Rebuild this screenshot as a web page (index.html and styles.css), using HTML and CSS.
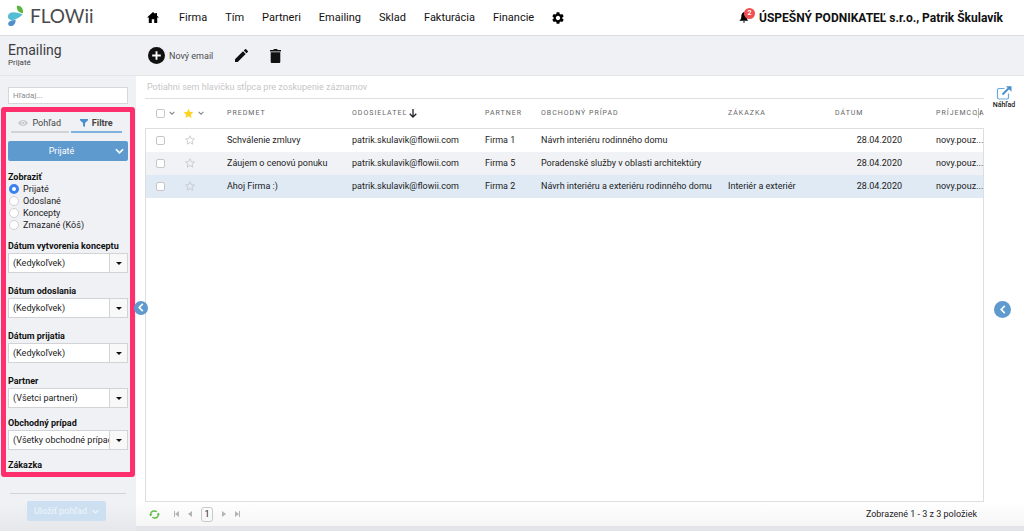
FILE: index.html
```
<!DOCTYPE html>
<html lang="sk">
<head>
<meta charset="utf-8">
<title>FLOWii – Emailing</title>
<link rel="stylesheet" href="styles.css">
</head>
<body>
<svg class="sprite" aria-hidden="true">
  <symbol id="chev-down" viewBox="0 0 10 6"><path d="M1 1l4 4 4-4" fill="none" stroke="currentColor" stroke-width="1.8"/></symbol>
  <symbol id="chev-left" viewBox="0 0 6 10"><path d="M5 1L1 5l4 4" fill="none" stroke="currentColor" stroke-width="1.8"/></symbol>
  <symbol id="star" viewBox="0 0 24 24"><path d="M12 1.8l3.1 7 7.6.7-5.8 5 1.8 7.5L12 18l-6.7 4 1.8-7.500-5.800-5 7.600-.7z"/></symbol>
</svg>

<header class="topbar">
  <a class="logo" href="#">
    <svg class="logo-mark" viewBox="0 0 18 22"><path d="M9.500.2c3.500-.6 7 2 6.300 8C12 8 8.500 4.500 9.500.2z" fill="#5cb53c"/><path d="M0 11c.5-4.800 7-5 15.500-1.800C11.500 13.800 4 17.500.8 14 0 13.200-.1 12 0 11z" fill="#55bdd3"/><path d="M8 15c.3 4-2 6.700-5 6.700-2.500 0-3.500-2.500-2.300-4.200C2 15.700 5 15.800 8 15z" fill="#4f8fcb"/></svg>
    <span>FLOWii</span>
  </a>
  <nav class="nav">
    <a class="home" href="#" aria-label="Domov"><svg width="12" height="11" viewBox="0 0 12 11"><path d="M6 0L0 5.600h1.800V11h3V7.200h2.400V11h3V5.600H12L10 3.700V1H8.300v1.100z"/></svg></a>
    <a href="#">Firma</a><a href="#">Tím</a><a href="#">Partneri</a><a href="#">Emailing</a><a href="#">Sklad</a><a href="#">Fakturácia</a><a href="#">Financie</a>
    <a href="#" aria-label="Nastavenia"><svg width="12" height="12" viewBox="2 2 20 20"><path d="M19.140 12.940c.04-.3.060-.610.060-.940 0-.320-.020-.640-.070-.940l2.030-1.580c.18-.140.230-.410.120-.610l-1.920-3.320c-.120-.220-.370-.290-.590-.220l-2.390.96c-.5-.380-1.030-.7-1.620-.940l-.36-2.540c-.040-.240-.240-.410-.480-.410h-3.840c-.240 0-.430.170-.470.410l-.36 2.540c-.590.240-1.130.570-1.620.940l-2.390-.96c-.220-.080-.470 0-.590.220L2.740 8.870c-.120.210-.080.470.120.610l2.030 1.580c-.050.300-.090.630-.090.940s.020.640.070.940l-2.030 1.580c-.180.140-.230.410-.120.610l1.920 3.320c.120.220.370.290.590.220l2.390-.96c.5.380 1.030.7 1.620.940l.36 2.540c.050.240.240.410.480.410h3.840c.240 0 .440-.170.470-.410l.36-2.540c.590-.240 1.130-.560 1.620-.940l2.390.96c.220.080.470 0 .590-.220l1.920-3.320c.120-.220.070-.470-.120-.610l-2.010-1.580zM12 15.600c-1.980 0-3.600-1.620-3.600-3.600s1.620-3.600 3.600-3.600 3.600 1.620 3.600 3.600-1.620 3.600-3.600 3.600z"/></svg></a>
  </nav>
  <div class="account">
    <button class="bell" aria-label="Upozornenia"><svg width="11" height="11" viewBox="0 0 11 11"><path d="M5 0C3 1 2.300 2.500 2.300 5c0 1.700-.8 2.700-2 3.700h9C8.200 7.700 7.700 6.500 7.700 5 7.700 2.500 7 1 5 0zM3.700 9.500h2.600L5 11z"/></svg><span class="badge">2</span></button>
    <a href="#">ÚSPEŠNÝ PODNIKATEĽ s.r.o., Patrik Škulavík</a>
  </div>
</header>

<div class="toolbar">
  <div class="heading"><h1>Emailing</h1><p>Prijaté</p></div>
  <div class="actions">
    <button><svg width="17" height="17" viewBox="0 0 17 17"><circle cx="8.500" cy="8.500" r="8.500"/><path d="M8.500 4.200v8.600M4.200 8.500h8.600" stroke="#fff" stroke-width="1.900"/></svg><span>Nový email</span></button>
    <button aria-label="Upraviť"><svg width="13" height="13" viewBox="3 3 18 18"><path d="M3 17.250V21h3.750L17.810 9.940l-3.750-3.750L3 17.250zM20.710 7.040a1 1 0 0 0 0-1.410l-2.340-2.340a1 1 0 0 0-1.410 0l-1.830 1.830 3.750 3.750 1.830-1.830z"/></svg></button>
    <button aria-label="Vymazať"><svg width="11" height="14" viewBox="0 0 11 14"><path d="M0 1h3.200l.8-1h3l.8 1H11v1.400H0zM.7 3.300h9.600v9.400c0 .8-.5 1.300-1.300 1.300H2c-.8 0-1.300-.5-1.300-1.300z"/></svg></button>
  </div>
</div>

<div class="workspace">
  <aside class="sidebar">
    <input class="search" type="text" placeholder="Hľadaj..." aria-label="Hľadaj">
    <section class="filters">
      <div class="tabs">
        <button class="tab"><svg width="10" height="6" viewBox="0 0 10 6"><path d="M0 3c2.500-4 7.500-4 10 0-2.500 4-7.500 4-10 0z" fill="#c9cacd"/><circle cx="5" cy="3" r="1.700" fill="#c9cacd" stroke="#f0f1f5" stroke-width=".8"/></svg>Pohľad</button>
        <button class="tab active"><svg width="8" height="8" viewBox="0 0 8 8"><path d="M0 0h8v1.200L5 4v4L3 7V4L0 1.200z" fill="#4a90cc"/></svg>Filtre</button>
      </div>
      <button class="view"><span>Prijaté</span><svg width="9" height="6"><use href="#chev-down"/></svg></button>
      <fieldset class="radios">
        <legend>Zobraziť</legend>
        <label><input type="radio" name="show" checked>Prijaté</label>
        <label><input type="radio" name="show">Odoslané</label>
        <label><input type="radio" name="show">Koncepty</label>
        <label><input type="radio" name="show">Zmazané (Kôš)</label>
      </fieldset>
      <div class="field date"><label for="f1">Dátum vytvorenia konceptu</label><div class="combo"><select id="f1"><option>(Kedykoľvek)</option></select></div></div>
      <div class="field date"><label for="f2">Dátum odoslania</label><div class="combo"><select id="f2"><option>(Kedykoľvek)</option></select></div></div>
      <div class="field date"><label for="f3">Dátum prijatia</label><div class="combo"><select id="f3"><option>(Kedykoľvek)</option></select></div></div>
      <div class="field"><label for="f4">Partner</label><div class="combo"><select id="f4"><option>(Všetci partneri)</option></select></div></div>
      <div class="field"><label for="f5">Obchodný prípad</label><div class="combo"><select id="f5"><option>(Všetky obchodné prípady)</option></select></div></div>
      <div class="field"><label for="f6">Zákazka</label><div class="combo"><select id="f6"><option>(Všetky zákazky)</option></select></div></div>
    </section>
    <div class="save"><button disabled><span>Uložiť pohľad</span><svg width="7" height="5"><use href="#chev-down"/></svg></button></div>
    <button class="toggle edge" aria-label="Skryť panel"><svg width="6" height="9"><use href="#chev-left"/></svg></button>
  </aside>

  <main class="content">
    <div class="columns">
      <div class="list">
        <p class="group">Potiahni sem hlavičku stĺpca pre zoskupenie záznamov</p>
        <table>
          <colgroup><col class="c-check"><col class="c-star"><col class="c-subject"><col class="c-sender"><col class="c-partner"><col><col class="c-order"><col class="c-date"><col class="c-to"></colgroup>
          <thead><tr>
            <th><div class="pick"><input type="checkbox" aria-label="Označiť všetko"><svg width="6" height="4"><use href="#chev-down"/></svg></div></th>
            <th><div class="pick"><svg class="gold" width="11" height="11"><use href="#star"/></svg><svg width="6" height="4"><use href="#chev-down"/></svg></div></th>
            <th>PREDMET</th>
            <th><div class="sorted">ODOSIELATEĽ<svg width="8" height="9" viewBox="0 0 8 9"><path d="M4 0v8M.7 4.700L4 8l3.300-3.300" fill="none" stroke="#222" stroke-width="1.300"/></svg></div></th>
            <th>PARTNER</th><th>OBCHODNÝ PRÍPAD</th><th>ZÁKAZKA</th><th>DÁTUM</th>
            <th><div class="last">PRÍJEMCO<svg width="5" height="10" viewBox="0 0 5 10"><path d="M.5 2.500v5M2.500 0v10M4.500 2.500v5" stroke="#b5b5b5"/></svg>A</div></th>
          </tr></thead>
          <tbody>
            <tr><td><input type="checkbox" aria-label="Označiť"></td><td class="star"><svg width="10" height="10"><use href="#star"/></svg></td><td>Schválenie zmluvy</td><td>patrik.skulavik@flowii.com</td><td>Firma 1</td><td>Návrh interiéru rodinného domu</td><td></td><td class="date-cell">28.04.2020</td><td>novy.pouz...</td></tr>
            <tr class="alt"><td><input type="checkbox" aria-label="Označiť"></td><td class="star"><svg width="10" height="10"><use href="#star"/></svg></td><td>Záujem o cenovú ponuku</td><td>patrik.skulavik@flowii.com</td><td>Firma 5</td><td>Poradenské služby v oblasti architektúry</td><td></td><td class="date-cell">28.04.2020</td><td>novy.pouz...</td></tr>
            <tr class="selected"><td><input type="checkbox" aria-label="Označiť"></td><td class="star"><svg width="10" height="10"><use href="#star"/></svg></td><td>Ahoj Firma :)</td><td>patrik.skulavik@flowii.com</td><td>Firma 2</td><td>Návrh interiéru a exteriéru rodinného domu</td><td>Interiér a exteriér</td><td class="date-cell">28.04.2020</td><td>novy.pouz...</td></tr>
          </tbody>
        </table>
        <div class="blank"></div>
      </div>
      <div class="rail">
        <a class="preview" href="#"><svg width="16" height="14" viewBox="0 0 16 14"><path d="M8.500 2.500H3A1.500 1.500 0 0 0 1.500 4v7.500A1.500 1.500 0 0 0 3 13h8a1.500 1.500 0 0 0 1.500-1.500V7.500" fill="none" stroke="#6aa9db" stroke-width="1.200"/><path d="M6.500 8.500L13 2" stroke="#4a90cc" stroke-width="2"/><path d="M10 .3h5.500v5.400z" fill="#4a90cc"/></svg><span>Náhľad</span></a>
        <button class="toggle big" aria-label="Zobraziť náhľad"><svg width="6" height="9"><use href="#chev-left"/></svg></button>
      </div>
    </div>
    <footer class="pager">
      <button aria-label="Obnoviť"><svg width="11" height="9" viewBox="0 0 11 9"><g fill="none" stroke="#62bd46" stroke-width="1.400"><path d="M1.600 5C1.600 2.500 3 1 5.300 1c1 0 1.800.3 2.500.8"/><path d="M9.400 4c0 2.500-1.400 4-3.700 4-1 0-1.800-.3-2.500-.8"/></g><path d="M0 4.200h3.400L1.700 6.600zM7.600 4.800H11L9.300 2.400z" fill="#62bd46"/></svg></button>
      <div class="pages">
        <button aria-label="Prvá strana"><svg width="5" height="6" viewBox="0 0 5 6"><path d="M0 0h1v6H0zM5 0v6L1 3z"/></svg></button>
        <button aria-label="Predchádzajúca strana"><svg width="4" height="6" viewBox="0 0 4 6"><path d="M4 0v6L0 3z"/></svg></button>
        <button class="current">1</button>
        <button aria-label="Ďalšia strana"><svg width="4" height="6" viewBox="0 0 4 6"><path d="M0 0v6l4-3z"/></svg></button>
        <button aria-label="Posledná strana"><svg width="5" height="6" viewBox="0 0 5 6"><path d="M4 0h1v6H4zM0 0v6l4-3z"/></svg></button>
      </div>
      <p>Zobrazené 1 - 3 z 3 položiek</p>
    </footer>
  </main>
</div>
</body>
</html>
```
FILE: styles.css
```
* { box-sizing: border-box; }
body {
  margin: 0;
  height: 100vh;
  display: flex;
  flex-direction: column;
  overflow: hidden;
  background: #fff;
  color: #1c1c1c;
  font: 9px/12px Roboto, "Noto Sans", sans-serif;
}
h1, p, fieldset, legend { margin: 0; padding: 0; border: 0; font-weight: 400; }
a { color: inherit; text-decoration: none; }
button { margin: 0; padding: 0; border: 0; background: none; color: inherit; font: inherit; }
svg { display: block; flex: none; }
.sprite { position: absolute; width: 0; height: 0; }

.topbar {
  flex: none;
  height: 36px;
  display: flex;
  align-items: center;
  padding: 0 21px 0 8px;
  border-bottom: 1px solid #dcdcde;
}
.logo { display: flex; align-items: center; gap: 5px; width: 139px; height: 32px; margin-bottom: 3px; color: #4a4a4c; font: 19px/24px Lato, sans-serif; }
.logo-mark { width: 17px; height: 22px; }
.nav { display: flex; align-items: center; gap: 18px; font-size: 11px; line-height: 16px; color: #111; }
.home { margin-right: 2px; }
.account { margin-left: auto; display: flex; align-items: center; gap: 9px; font-size: 12px; line-height: 16px; font-weight: 700; color: #111; }
.bell { position: relative; }
.badge {
  position: absolute;
  left: 5px;
  top: -4px;
  width: 11px;
  height: 11px;
  border-radius: 50%;
  background: #ef5052;
  color: #fff;
  font-size: 7px;
  line-height: 11px;
}

.toolbar { flex: none; height: 40px; display: flex; background: #f0f1f5; border-bottom: 1px solid #e6e6e8; }
.heading { width: 148px; padding: 7px 8px; font-size: 8px; line-height: 9px; color: #444; }
.heading h1 { font-size: 14px; line-height: 15px; color: #3d3d3f; }
.actions { display: flex; align-items: center; gap: 22px; color: #4c4c4e; }
.actions svg { fill: #111; }
.actions button { display: flex; align-items: center; gap: 4px; }

.workspace { flex: 1; min-height: 0; display: flex; }
.sidebar {
  position: relative;
  flex: none;
  width: 136px;
  display: flex;
  flex-direction: column;
  padding: 11px 1px 0;
  background: linear-gradient(#f0f1f5 94%, #e6e7eb);
}
.search { margin: 0 7px 3px; height: 17px; padding: 0 4px; border: 1px solid #d6d7da; background: #fff; font: 8px/12px Roboto, sans-serif; }
.search::placeholder { color: #8c8c8f; }
.filters { flex: 1; min-height: 0; overflow: hidden; padding: 3px 2px 0; border: 5px solid #ff2f6d; border-radius: 3px; }
.tabs { display: flex; gap: 2px; padding: 0 6px 0 3px; margin-bottom: 8px; }
.tab { flex: 1 1 57px; height: 18px; display: flex; justify-content: center; align-items: center; gap: 4px; color: #444; border-bottom: 2px solid #d2d3d6; }
.tab.active { flex-basis: 51px; font-weight: 700; border-color: #7fb2df; }
.view { width: 100%; height: 20px; display: flex; align-items: center; padding: 0 4px 0 0; border-radius: 2px; background: #5e9acd; color: #fff; }
.view span { flex: 1; }
.radios { padding-top: 10px; margin-bottom: 9px; }
.radios legend { float: left; width: 100%; font-weight: 700; line-height: 12px; color: #111; }
.radios label { clear: both; display: flex; align-items: center; gap: 4px; height: 12px; padding-left: 1px; }
.radios input { appearance: none; flex: none; width: 10px; height: 10px; margin: 0; border: 1px solid #d2d2d5; border-radius: 50%; background: #fff; }
.radios input:checked { border: 3px solid #3b82f0; }
.field { margin-bottom: 9px; }
.field.date { margin-bottom: 12px; }
.field label { display: block; height: 13px; line-height: 13px; font-weight: 700; color: #111; white-space: nowrap; }
.combo { position: relative; height: 20px; border: 1px solid #d2d3d6; background: #fff; }
.combo select { appearance: none; display: block; width: 100%; height: 100%; margin: 0; padding: 0 16px 1px 4px; border: 0; background: transparent; color: #222; font: inherit; }
.combo::before { content: ""; position: absolute; right: 0; top: 0; bottom: 0; width: 17px; border-left: 1px solid #d2d3d6; background: #f8f8f9; pointer-events: none; }
.combo::after { content: ""; position: absolute; right: 5px; top: 8px; border: 3px solid transparent; border-top-color: #111; border-bottom: 0; pointer-events: none; }
.save { flex: none; display: flex; justify-content: center; margin: 16px 9px 0; padding: 7px 0 10px; border-top: 1px solid #d2d3d6; }
.save button { height: 20px; display: flex; align-items: center; gap: 5px; padding: 0 7px; border-radius: 2px; background: #cde0f1; color: #f0f4f9; margin-right: 3px; }

.toggle { display: flex; align-items: center; justify-content: center; width: 14px; height: 14px; border-radius: 50%; background: #5e9acd; color: #fff; }
.edge { position: absolute; right: -12px; top: 50%; z-index: 1; margin-top: -3px; }
.big { position: absolute; left: 10px; top: 50%; width: 17px; height: 17px; margin-top: 12px; }

.content { flex: 1; min-width: 0; display: flex; flex-direction: column; border-bottom: 5px solid #e4e5ea; }
.columns { flex: 1; min-height: 0; display: flex; padding-left: 9px; }
.list { flex: 1; min-width: 0; display: flex; flex-direction: column; }
.group { flex: none; height: 23px; padding: 5px 2px 0; border-bottom: 1px solid #dededf; color: #c6c6c8; }
table { flex: none; width: 100%; table-layout: fixed; border-collapse: separate; border-spacing: 0; }
.c-check { width: 30px; }
.c-star { width: 44px; }
.c-subject { width: 125px; }
.c-sender { width: 133px; }
.c-partner { width: 56px; }
.c-order { width: 107px; }
.c-date { width: 101px; }
.c-to { width: 56px; }
th { height: 30px; padding: 0 0 1px 8px; border-bottom: 1px solid #dededf; text-align: left; font-size: 7px; font-weight: 400; letter-spacing: 1px; color: #666; white-space: nowrap; }
td { height: 23px; padding: 0 0 1px 8px; white-space: nowrap; }
th:first-child { padding-left: 11px; }
td:first-child { padding-left: 10px; border-left: 1px solid #dededf; }
td:last-child { border-right: 1px solid #dededf; }
td.star { padding-left: 10px; }
.star svg { fill: none; stroke: #c4c5c8; stroke-width: 2; }
td.date-cell { padding-right: 26px; text-align: right; }
.alt td { background: #f1f2f5; }
.selected td { background: #dfeaf5; }
.pick { display: flex; align-items: center; gap: 4px; color: #888; }
.gold { fill: #ffd21c; }
.sorted { display: flex; align-items: center; gap: 2px; }
.last { display: flex; align-items: center; }
.last svg { margin: 0 -2px; }
td input, th input { appearance: none; display: block; flex: none; width: 9px; height: 9px; margin: 0; border: 1px solid #c6c6c9; border-radius: 2px; background: #fff; }
.blank { flex: 1; border: 1px solid #dededf; border-top: 0; }
.rail { position: relative; flex: none; width: 40px; }
.preview { display: flex; flex-direction: column; align-items: center; padding-top: 10px; font-size: 7px; line-height: 10px; font-weight: 500; }
.pager { flex: none; height: 24px; display: flex; align-items: center; padding: 0 47px 0 13px; background: linear-gradient(#fff, #f5f5f6); }
.pages { display: flex; align-items: center; gap: 9px; margin-left: 14px; }
.pages svg { fill: #b4b4b6; }
.pages .current { width: 12px; height: 15px; border: 1px solid #c9c9cb; border-radius: 3px; line-height: 13px; }
.pager p { margin-left: auto; }
```
